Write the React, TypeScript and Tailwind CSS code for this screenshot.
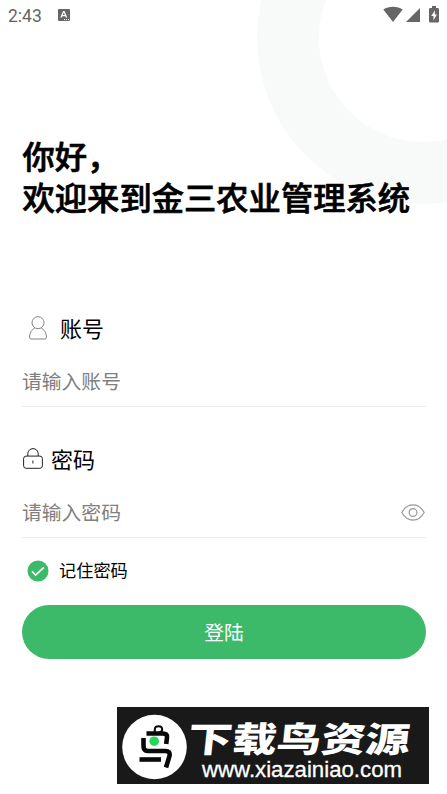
import { useState } from "react";

function StatusBar() {
  return (
    <div className="flex h-8 items-start justify-between pr-2 pl-2 text-[#666]">
      <div className="flex items-center pt-[6px]">
        <span className="w-[50px] font-[Roboto] text-[17.5px] leading-[21px]">2:43</span>
        <svg width="12" height="12" viewBox="0 0 12 12" className="-mt-[3px]">
          <rect width="12" height="12" rx="1" fill="#666" />
          <path d="M3 8.6 5.5 2.6h.6l2.5 6M4 6.6h3.7" fill="none" stroke="#fff" strokeWidth="1.3" />
          <path d="M6 10.6h1M8 10.6h1M10 10.6h1" stroke="#fff" strokeWidth="1" />
        </svg>
      </div>
      <div className="flex pt-1.5">
        <svg width="20" height="16" viewBox="0 0 20 16">
          <path d="M.3 3.6C5.8-.2 14.2-.2 19.7 3.6L10 16Z" fill="#666" />
        </svg>
        <svg width="14" height="14" viewBox="0 0 14 14" className="mt-0.5 ml-[3px]">
          <path d="M14 0v14H0Z" fill="#666" />
        </svg>
        <svg width="10" height="17" viewBox="0 0 10 17" className="ml-[9px]">
          <path d="M3 0h4v2h1.500q1.500 0 1.500 1.200V15.500q0 1-1.500 1h-7Q0 16.500 0 15.500V3.200Q0 2 1.500 2H3Z" fill="#666" />
          <path d="M6 4.200 2.200 10h2.300v4.200L8 8.400H5.800Z" fill="#fff" />
        </svg>
      </div>
    </div>
  );
}

function UserIcon() {
  return (
    <svg width="18" height="24" viewBox="0 0 18 24" fill="none" stroke="#777" strokeWidth=".9">
      <circle cx="9" cy="6.700" r="6" />
      <path d="M5.800 12C2.500 13.700.6 17.200.5 21q0 2 1.600 2h13.800q1.600 0 1.600-2c-.1-3.800-2-7.300-5.300-9" />
    </svg>
  );
}

function LockIcon() {
  return (
    <svg width="20" height="21" viewBox="0 0 20 21" fill="none" stroke="#222" strokeWidth="1" className="-mt-px">
      <path d="M4.800 8V5.800a5.200 5.200 0 0 1 10.400 0V8" />
      <rect x=".6" y="8.100" width="18.800" height="12.200" rx="2.500" />
      <path d="M9.900 12.500v3" />
    </svg>
  );
}

function EyeIcon() {
  return (
    <svg width="24" height="17" viewBox="0 0 24 17" fill="none" stroke="#999" strokeWidth="1.200">
      <path d="M.8 8.500C6.500-1.600 17.500-1.600 23.200 8.500 17.500 18.600 6.500 18.600.8 8.500Z" />
      <circle cx="12" cy="8.500" r="3.900" />
    </svg>
  );
}

function SiteBanner() {
  return (
    <div className="mt-12 ml-[117px] flex h-[77px] w-[312px] bg-[#191919]">
      <svg width="312" height="77" viewBox="0 0 312 77">
        <circle cx="37.500" cy="40" r="32.300" fill="#fff" />
        <g fill="none" stroke="#090909" strokeWidth="4.600">
          <path d="M37.800 25v-2.500q0-3.300 3.700-3.300t3.700 3.300q0 2.500-3 2.500" strokeWidth="2" />
          <path d="M29.500 26.500h16.500q4.500 0 4 4l-.8 6.500" />
          <path d="M26.500 31v8q0 5 4 5h18q5 0 4 5l-3.500 11.500" />
          <path d="M22.500 52.500h21.500" />
        </g>
        <circle cx="37.200" cy="34.200" r="4.800" fill="#22d75a" />
        <text
          x="71"
          y="52"
          textLength="222"
          lengthAdjust="spacingAndGlyphs"
          className="fill-white font-['Noto_Sans_CJK_SC'] text-[40px] font-black"
          transform="translate(3.500 0) skewX(-6) scale(1 .87)"
        >
          下载鸟资源
        </text>
        <text
          x="85"
          y="70"
          textLength="200"
          lengthAdjust="spacingAndGlyphs"
          className="fill-white stroke-white font-['Liberation_Sans'] text-[22px]"
          strokeWidth=".3"
        >
          www.xiazainiao.com
        </text>
      </svg>
    </div>
  );
}

export default function App() {
  const [account, setAccount] = useState("");
  const [password, setPassword] = useState("");
  const [visible, setVisible] = useState(false);
  const [remember, setRemember] = useState(true);

  return (
    <div className="relative h-[794px] w-[447px] overflow-hidden bg-white font-['Noto_Sans_CJK_SC',sans-serif] text-black">
      <div className="absolute -top-32 left-[257px] size-[332px] rounded-full border-[62px] border-[#f7faf9]" />

      <div className="relative">
        <StatusBar />

        <h1 className="mt-[103px] ml-[22.5px] text-[32.3px] leading-[41px] font-medium whitespace-nowrap [-webkit-text-stroke:0.7px_black]">
          你好，
          <br />
          欢迎来到金三农业管理系统
        </h1>

        <form className="mr-[21px] ml-[22px] mt-[95px]" onSubmit={(e) => e.preventDefault()}>
          <label htmlFor="account" className="flex h-8 items-center pl-[7px] text-[22px]">
            <UserIcon />
            <span className="-mt-0.5 ml-[13px]">账号</span>
          </label>
          <div className="mt-[11px] flex h-[52px] items-center border-b border-[#ebebeb]">
            <input
              id="account"
              value={account}
              onChange={(e) => setAccount(e.target.value)}
              placeholder="请输入账号"
              className="w-full text-[19.8px] outline-none placeholder:text-[#808080]"
            />
          </div>

          <label htmlFor="password" className="mt-9 flex h-8 items-center pl-px text-[22px]">
            <LockIcon />
            <span className="-mt-0.5 ml-2">密码</span>
          </label>
          <div className="mt-[11px] flex h-[52px] items-center border-b border-[#ebebeb]">
            <input
              id="password"
              type={visible ? "text" : "password"}
              value={password}
              onChange={(e) => setPassword(e.target.value)}
              placeholder="请输入密码"
              className="min-w-0 flex-1 text-[19.8px] outline-none placeholder:text-[#808080]"
            />
            <button type="button" className="mt-0.5 mr-px" onClick={() => setVisible(!visible)}>
              <EyeIcon />
            </button>
          </div>

          <button
            type="button"
            onClick={() => setRemember(!remember)}
            className="mt-5 flex h-[26px] items-center pl-[5px] text-[17.2px]"
          >
            <svg width="22" height="22" viewBox="0 0 22 22" fill="none">
              <circle cx="11" cy="11" r="10.500" fill={remember ? "#3dba69" : "#ccc"} />
              <path d="m5 11.200 3.600 3.900 8.300-7.800" stroke="#fff" strokeWidth="1.600" />
            </svg>
            <span className="-mt-0.5 ml-2.5">记住密码</span>
          </button>

          <button
            type="submit"
            className="mt-[21px] flex h-[54px] w-full items-center justify-center rounded-full bg-[#3dba69] text-[19.8px] text-white"
          >
            登陆
          </button>
        </form>

        <SiteBanner />
      </div>
    </div>
  );
}
